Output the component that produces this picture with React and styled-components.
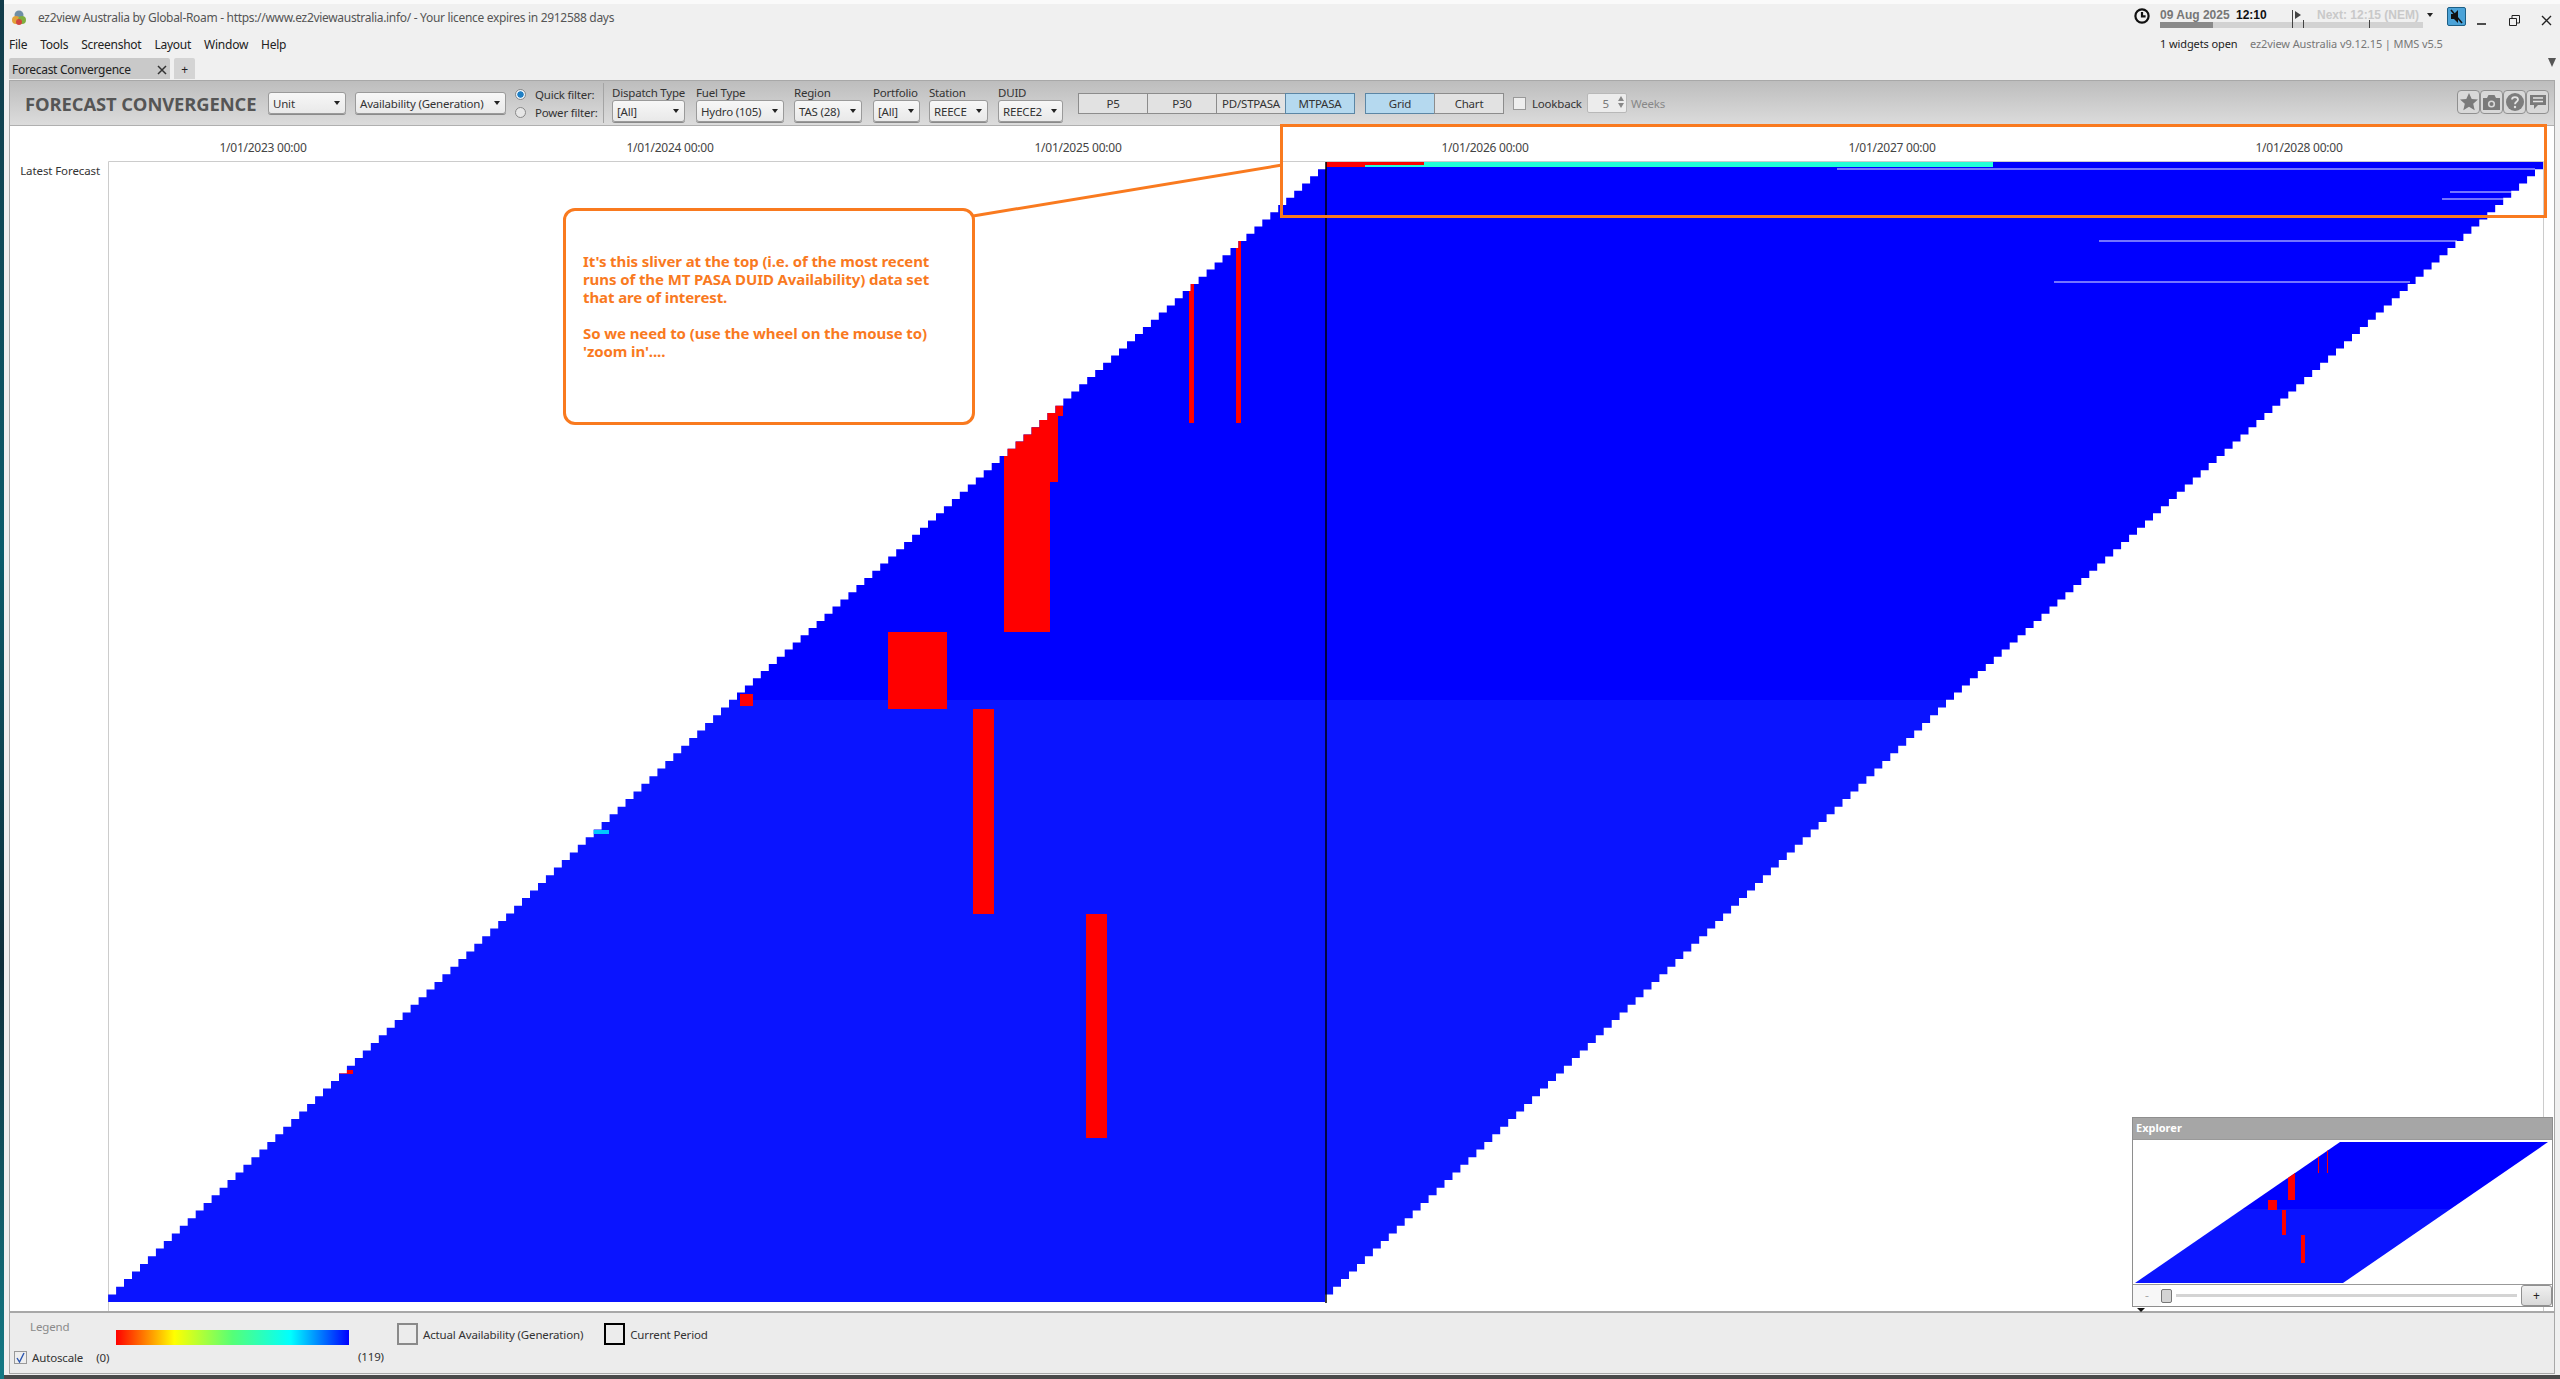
import React from 'react';
import styled, { createGlobalStyle } from 'styled-components';

const GlobalStyle = createGlobalStyle`
  html, body { margin: 0; padding: 0; background: #0d3340; }
  body { font-family: "Noto Sans", "Open Sans", sans-serif; font-size: 12px; color: #333; overflow: hidden; }
`;

const ORANGE = '#f97a1f';

// rows of the convergence grid: tighter above the July 2025 break than below it
const rowTop = (i) => (i <= 75 ? 162 + i * 7.17 : 700 + (i - 75) * 7.62);
const ROWS = 154;
const STEP = 7.96;

const buildStairs = () => {
  let left = '';
  let right = '';
  for (let i = 0; i < ROWS; i++) {
    const y0 = rowTop(i).toFixed(1);
    const y1 = rowTop(i + 1).toFixed(1);
    const lx = (1326 - i * STEP).toFixed(1);
    const rx = (2543 - i * STEP).toFixed(1);
    left += `L${lx} ${y0}L${lx} ${y1}`;
    right = `L${rx} ${y1}L${rx} ${y0}` + right;
  }
  return 'M' + left.slice(1) + right + 'Z';
};

const STAIRS = buildStairs();

const RED_CELLS = [
  [1189, 270, 5, 153],
  [1236, 230, 5, 193],
  [1004, 395, 46, 237],
  [1050, 395, 8, 87],
  [1058, 395, 5, 21],
  [888, 632, 59, 77],
  [740, 694, 13, 12],
  [973, 709, 21, 205],
  [1086, 914, 21, 224],
  [330, 1070, 23, 4],
];

const WHITE_LINES = [
  [1837, 2535, 169],
  [2450, 2512, 192],
  [2442, 2504, 199],
  [2099, 2457, 241],
  [2054, 2410, 282],
];

const AXIS = [
  ['1/01/2023 00:00', 263],
  ['1/01/2024 00:00', 670],
  ['1/01/2025 00:00', 1078],
  ['1/01/2026 00:00', 1485],
  ['1/01/2027 00:00', 1892],
  ['1/01/2028 00:00', 2299],
];

const FILTERS = [
  { label: 'Dispatch Type', value: '[All]', w: 73, gap: 0 },
  { label: 'Fuel Type', value: 'Hydro (105)', w: 88, gap: 11 },
  { label: 'Region', value: 'TAS (28)', w: 68, gap: 10 },
  { label: 'Portfolio', value: '[All]', w: 47, gap: 11 },
  { label: 'Station', value: 'REECE', w: 59, gap: 9 },
  { label: 'DUID', value: 'REECE2', w: 65, gap: 10 },
];

const Page = styled.div`
  position: relative;
  width: 2560px;
  height: 1379px;
  overflow: hidden;
  background: linear-gradient(180deg, #123c4a, #0b5b6a 40%, #0f2e3a 70%, #137a86);
`;

const AppWindow = styled.div`
  margin-left: 4px;
  width: 2556px;
  height: 1379px;
  display: flex;
  flex-direction: column;
  background: #f0f0f0;
  border-bottom: 4px solid #4a4a4a;
  box-sizing: border-box;
`;

const TitleBar = styled.div`
  height: 58px;
  display: flex;
  justify-content: space-between;
  flex: none;
  border-top: 4px solid #fafafa;
  box-sizing: border-box;
`;

const TitleLeft = styled.div`
  display: flex;
  flex-direction: column;
`;

const TitleRow = styled.div`
  height: 27px;
  display: flex;
  align-items: center;
  gap: 11px;
  padding-left: 7px;
  color: #555;
  font-size: 12px;
  letter-spacing: -0.31px;
`;

const MenuRow = styled.div`
  display: flex;
  gap: 13px;
  padding-left: 5px;
  height: 26px;
  align-items: center;
  color: #222;
  font-size: 12px;
  letter-spacing: -0.25px;
`;

const Status = styled.div`
  display: flex;
  align-items: flex-start;
  padding-top: 3px;
  margin-right: -2px;
`;

const ClockWrap = styled.div`
  width: 26px;
  padding-top: 1px;
  display: flex;
`;

const Timeline = styled.div`
  width: 287px;
  display: flex;
  flex-direction: column;
`;

const DateRow = styled.div`
  display: flex;
  align-items: center;
  height: 15px;
  font-family: "Liberation Sans", sans-serif;
  font-weight: 700;
  font-size: 12px;
  white-space: nowrap;
`;

const DateText = styled.span`
  color: #777;
  width: 76px;
`;

const TimeText = styled.span`
  color: #111;
  width: 59px;
`;

const NextText = styled.span`
  color: #c9c9c9;
  width: 104px;
`;

const PlayMark = styled.span`
  width: 0;
  height: 0;
  border-left: 6px solid #444;
  border-top: 4px solid transparent;
  border-bottom: 4px solid transparent;
  margin-right: 16px;
`;

const DownCaret = styled.span`
  width: 0;
  height: 0;
  border-top: 4px solid #222;
  border-left: 3px solid transparent;
  border-right: 3px solid transparent;
  margin-left: 6px;
`;

const Progress = styled.div`
  position: relative;
  width: 263px;
  height: 6px;
  background: #d2d2d2;
`;

const ProgressFill = styled.div`
  height: 100%;
  background: #8a8a8a;
`;

const Tick = styled.div`
  position: absolute;
  bottom: 0;
  width: 1px;
  height: ${(p) => p.$h}px;
  background: #444;
`;

const InfoRow = styled.div`
  display: flex;
  margin-top: 8px;
  font-size: 11px;
  letter-spacing: -0.1px;
  white-space: nowrap;
`;

const WidgetCount = styled.span`
  color: #222;
  width: 90px;
`;

const Version = styled.span`
  color: #777;
`;

const MuteButton = styled.div`
  width: 19px;
  height: 19px;
  flex: none;
  margin-top: 0;
  background: #4ba3d8;
  border: 1px solid #1d5f86;
  border-radius: 2px;
  display: flex;
  align-items: center;
  justify-content: center;
  box-sizing: border-box;
`;

const WinButton = styled.div`
  width: 32px;
  height: 26px;
  flex: none;
  display: flex;
  align-items: center;
  justify-content: center;
`;

const TabStrip = styled.div`
  height: 22px;
  flex: none;
  display: flex;
  align-items: flex-start;
  padding-left: 5px;
  gap: 4px;
`;

const Tab = styled.div`
  height: 21px;
  width: ${(p) => p.$w}px;
  background: ${(p) => p.$bg};
  border-radius: 2px 2px 0 0;
  display: flex;
  align-items: center;
  justify-content: ${(p) => (p.$center ? 'center' : 'space-between')};
  padding: 2px 3px 0;
  box-sizing: border-box;
  font-size: 12px;
  letter-spacing: -0.3px;
  color: #222;
`;

const FilterMark = styled.div`
  margin-left: auto;
  margin-right: 4px;
  width: 0;
  height: 0;
  border-top: 9px solid #555;
  border-left: 4px solid transparent;
  border-right: 4px solid transparent;
`;

const Panel = styled.div`
  flex: 1;
  margin: 0 5px 1px 5px;
  border: 1px solid #a8a8a8;
  display: flex;
  flex-direction: column;
  min-height: 0;
  background: #fff;
`;

const Toolbar = styled.div`
  height: 45px;
  flex: none;
  display: flex;
  align-items: center;
  background: linear-gradient(180deg, #bdbdbd, #dcdcdc);
  border-bottom: 1px solid #b0b0b0;
  box-sizing: border-box;
  padding-left: 15px;
  position: relative;
`;

const ToolTitle = styled.div`
  font-family: "Open Sans", sans-serif;
  font-weight: 700;
  font-size: 18.4px;
  letter-spacing: -0.1px;
  color: #555;
  width: 243px;
  white-space: nowrap;
`;

const SelectBox = styled.div`
  width: ${(p) => p.$w}px;
  height: 22px;
  margin-left: ${(p) => p.$ml || 0}px;
  flex: none;
  background: linear-gradient(180deg, #f7f7f7, #e9e9e9);
  border: 1px solid #9a9a9a;
  border-radius: 3px;
  box-shadow: 0 1px 0 #8a8a8a;
  box-sizing: border-box;
  display: flex;
  align-items: center;
  justify-content: space-between;
  padding: 0 5px 0 4px;
  font-size: 11.5px;
  letter-spacing: -0.2px;
  color: #333;
  white-space: nowrap;
  overflow: hidden;
`;

const SelectCaret = styled.span`
  flex: none;
  width: 0;
  height: 0;
  border-top: 4px solid #222;
  border-left: 3px solid transparent;
  border-right: 3px solid transparent;
`;

const RadioGroup = styled.div`
  width: 84px;
  margin-left: 9px;
  display: flex;
  flex-direction: column;
  gap: 3px;
  flex: none;
  overflow: hidden;
`;

const RadioRow = styled.div`
  display: flex;
  align-items: center;
  gap: 9px;
  height: 15px;
  font-size: 11.5px;
  letter-spacing: -0.2px;
  white-space: nowrap;
  color: #333;
`;

const RadioDot = styled.span`
  width: 9px;
  height: 9px;
  border-radius: 50%;
  flex: none;
  border: 1px solid #888;
  background: ${(p) => (p.$on ? 'radial-gradient(circle, #1f7fc4 0 45%, #e8f3fb 55%)' : '#e6e6e6')};
`;

const Divider = styled.div`
  width: 1px;
  height: 40px;
  background: #a4a4a4;
  margin: 0 8px 0 4px;
  flex: none;
`;

const FilterCol = styled.div`
  width: ${(p) => p.$w}px;
  margin-left: ${(p) => p.$gap}px;
  flex: none;
  display: flex;
  flex-direction: column;
  gap: 0;
  padding-top: 1px;
`;

const FilterLabel = styled.div`
  font-size: 11.5px;
  line-height: 15px;
  letter-spacing: -0.2px;
  color: #333;
  white-space: nowrap;
`;

const ButtonGroup = styled.div`
  display: flex;
  margin-left: ${(p) => p.$ml}px;
  flex: none;
`;

const ToggleButton = styled.div`
  width: 70px;
  height: 21px;
  box-sizing: border-box;
  border: 1px solid ${(p) => (p.$on ? '#5b86a5' : '#8c8c8c')};
  background: ${(p) => (p.$on ? '#b5d9ef' : '#e2e2e2')};
  display: flex;
  align-items: center;
  justify-content: center;
  font-size: 11.5px;
  letter-spacing: -0.2px;
  color: #333;
  margin-left: -1px;
`;

const CheckBox = styled.span`
  width: 13px;
  height: 13px;
  flex: none;
  box-sizing: border-box;
  border: 1px solid #999;
  background: #eee;
  display: flex;
  align-items: center;
  justify-content: center;
`;

const LookbackWrap = styled.div`
  display: flex;
  align-items: center;
  margin-left: 9px;
  font-size: 11.5px;
  letter-spacing: -0.2px;
  color: #333;
`;

const LookbackText = styled.span`
  margin-left: 6px;
  width: 55px;
`;

const Spinner = styled.div`
  width: 40px;
  height: 20px;
  box-sizing: border-box;
  border: 1px solid #b8b8b8;
  border-radius: 2px;
  background: #ececec;
  display: flex;
  align-items: center;
  justify-content: flex-end;
  padding-right: 17px;
  color: #777;
  position: relative;
`;

const SpinArrows = styled.span`
  position: absolute;
  right: 2px;
  top: 2px;
  display: flex;
  flex-direction: column;
  gap: 2px;
`;

const Arrow = styled.span`
  width: 0;
  height: 0;
  border-left: 3px solid transparent;
  border-right: 3px solid transparent;
  border-${(p) => p.$dir}: 5px solid #888;
`;

const Weeks = styled.span`
  margin-left: 4px;
  color: #888;
`;

const IconButtons = styled.div`
  margin-left: auto;
  margin-right: 5px;
  margin-top: -2px;
  display: flex;
  flex: none;
`;

const IconButton = styled.div`
  width: 23px;
  height: 24px;
  box-sizing: border-box;
  border: 1px solid #909090;
  border-radius: 4px;
  background: #d8d8d8;
  display: flex;
  align-items: center;
  justify-content: center;
`;

const AxisRow = styled.div`
  height: 35px;
  flex: none;
  position: relative;
  background: #fff;
`;

const AxisLabel = styled.span`
  position: absolute;
  top: 13px;
  transform: translateX(-50%);
  font-size: 12px;
  letter-spacing: -0.25px;
  color: #444;
  white-space: nowrap;
`;

const ChartRow = styled.div`
  flex: 1;
  min-height: 0;
  display: flex;
  background: #fff;
  border-bottom: 2px solid #a8a8a8;
`;

const RowGutter = styled.div`
  width: 98px;
  flex: none;
  text-align: right;
  padding: 2px 8px 0 0;
  box-sizing: border-box;
  font-size: 11.5px;
  letter-spacing: -0.1px;
  color: #333;
`;

const PlotSvg = styled.svg`
  display: block;
  flex: 1;
  min-width: 0;
  height: 100%;
`;

const Footer = styled.div`
  height: 60px;
  flex: none;
  background: #ececec;
  display: flex;
  padding-left: 4px;
  font-size: 11.5px;
  letter-spacing: -0.15px;
  color: #333;
`;

const LegendGrid = styled.div`
  display: grid;
  grid-template-columns: 102px 233px 48px;
  grid-template-rows: 33px 27px;
  flex: none;
`;

const LegendTitle = styled.div`
  padding: 6px 0 0 16px;
  color: #8a8a8a;
`;

const ColourBar = styled.div`
  height: 15px;
  margin-top: 17px;
  background: linear-gradient(90deg, #f00, #ff0 25%, #55ff77 50%, #0ff 75%, #00f);
`;

const AutoRow = styled.div`
  display: flex;
  align-items: center;
  gap: 5px;
  height: 20px;
  margin-top: 1px;
  grid-column: 1;
`;

const EndValue = styled.div`
  grid-column: 3;
  padding: 3px 0 0 9px;
`;

const KeyItem = styled.div`
  display: flex;
  align-items: center;
  gap: 5px;
  height: 22px;
  margin: 10px 0 0 ${(p) => p.$ml}px;
  flex: none;
`;

const KeySwatch = styled.span`
  width: 21px;
  height: 22px;
  box-sizing: border-box;
  border: 2px solid ${(p) => p.$c};
  display: block;
`;

const CalloutBox = styled.div`
  position: absolute;
  left: 563px;
  top: 208px;
  width: 412px;
  height: 217px;
  box-sizing: border-box;
  border: 3px solid ${ORANGE};
  border-radius: 12px;
  background: #fff;
  padding: 41px 17px 0 17px;
  color: ${ORANGE};
  font-family: "Noto Sans", sans-serif;
  font-weight: 700;
  font-size: 15px;
  line-height: 18px;
  letter-spacing: -0.1px;
`;

const CalloutLine = styled.p`
  margin: 0;
  min-height: 18px;
  white-space: nowrap;
`;

const HighlightBox = styled.div`
  position: absolute;
  left: 1280px;
  top: 124px;
  width: 1267px;
  height: 94px;
  box-sizing: border-box;
  border: 3px solid ${ORANGE};
  pointer-events: none;
`;

const Leader = styled.svg`
  position: absolute;
  left: 960px;
  top: 150px;
`;

const Explorer = styled.div`
  position: absolute;
  left: 2132px;
  top: 1117px;
  width: 421px;
  height: 190px;
  box-sizing: border-box;
  border: 1px solid #8e8e8e;
  background: #fff;
  display: flex;
  flex-direction: column;
`;

const ExplorerHeader = styled.div`
  height: 21px;
  flex: none;
  background: #a6a6a6;
  color: #fff;
  font-weight: 700;
  font-size: 11px;
  line-height: 20px;
  padding-left: 3px;
`;

const ExplorerSvg = styled.svg`
  display: block;
  flex: none;
  border-bottom: 1px solid #999;
  border-top: 1px solid #999;
`;

const SliderRow = styled.div`
  flex: 1;
  display: flex;
  align-items: center;
`;

const ZoomButton = styled.div`
  width: ${(p) => p.$w}px;
  height: 21px;
  flex: none;
  box-sizing: border-box;
  border: ${(p) => (p.$plain ? '0' : '1px solid #909090')};
  border-radius: 3px;
  background: ${(p) => (p.$plain ? '#f7f7f7' : 'linear-gradient(180deg,#f0f0f0,#d8d8d8)')};
  color: ${(p) => (p.$plain ? '#aaa' : '#222')};
  display: flex;
  align-items: center;
  justify-content: center;
  font-size: 12px;
`;

const SliderThumb = styled.div`
  width: 11px;
  height: 14px;
  flex: none;
  box-sizing: border-box;
  border: 1px solid #777;
  border-radius: 2px;
  background: #d4d4d4;
`;

const SliderTrack = styled.div`
  flex: 1;
  height: 3px;
  margin: 0 4px;
  background: #d4d4d4;
`;

const ExplorerCaret = styled.div`
  position: absolute;
  left: 2137px;
  top: 1308px;
  width: 0;
  height: 0;
  border-top: 4px solid #111;
  border-left: 4px solid transparent;
  border-right: 4px solid transparent;
`;

const Logo = () => (
  <svg width="16" height="16" viewBox="0 0 16 16">
    <circle cx="8" cy="5" r="4.5" fill="#6f8fa6" />
    <circle cx="5" cy="10" r="4" fill="#e2a23a" />
    <circle cx="11" cy="10" r="4" fill="#7fae3f" />
    <circle cx="8" cy="12" r="3" fill="#d2453f" />
  </svg>
);

const ClockIcon = () => (
  <svg width="16" height="16" viewBox="0 0 16 16" fill="none" stroke="#111" strokeWidth="2.2">
    <circle cx="8" cy="8" r="6.6" />
    <path d="M8 4v4.4h3.6" />
  </svg>
);

const MuteIcon = () => (
  <svg width="15" height="15" viewBox="0 0 15 15">
    <path d="M2 5h3l4-4v13l-4-4H2z" fill="#111" />
    <path d="M2 1l11 13" stroke="#111" strokeWidth="1.6" />
  </svg>
);

const StarIcon = () => (
  <svg width="20" height="20" viewBox="0 0 20 20">
    <path d="M10 1l2.7 6 6.3.6-4.8 4.2 1.5 6.4L10 14.8 4.3 18.2l1.5-6.4L1 7.6 7.3 7z" fill="#7a7a7a" />
  </svg>
);

const CameraIcon = () => (
  <svg width="19" height="17" viewBox="0 0 19 17">
    <path d="M1 4h4l1.5-3h6L14 4h4v12H1z" fill="#7a7a7a" />
    <circle cx="9.5" cy="10" r="3.6" fill="#d8d8d8" />
    <circle cx="9.5" cy="10" r="2" fill="#7a7a7a" />
  </svg>
);

const HelpIcon = () => (
  <svg width="20" height="20" viewBox="0 0 20 20">
    <circle cx="10" cy="10" r="9" fill="#7d7d7d" />
    <path d="M7 7.6C7 4.2 13 4.2 13 7.6c0 2.2-3 2.2-3 4.6" fill="none" stroke="#e4e4e4" strokeWidth="1.8" />
    <circle cx="10" cy="15" r="1.2" fill="#e4e4e4" />
  </svg>
);

const ChatIcon = () => (
  <svg width="18" height="18" viewBox="0 0 18 18">
    <path d="M1 2h16v10H9l-4 4v-4H1z" fill="#7a7a7a" />
    <path d="M4 5h10M4 8.5h10" stroke="#e4e4e4" strokeWidth="1.4" />
  </svg>
);

const Convergence = () => (
  <PlotSvg viewBox="108 161 2446 1150" preserveAspectRatio="none">
    <defs>
      <clipPath id="stairs">
        <path d={STAIRS} />
      </clipPath>
    </defs>
    <path d="M108.5 161.5H2543.5V1311" fill="none" stroke="#ccc" />
    <path d="M108.5 161.5V1311" fill="none" stroke="#ccc" />
    <g clipPath="url(#stairs)">
      <rect x="100" y="160" width="2450" height="540" fill="#0000ff" />
      <rect x="100" y="700" width="2450" height="610" fill="#0a14ff" />
      {RED_CELLS.map(([x, y, w, h]) => (
        <rect key={`${x}-${y}`} x={x} y={y} width={w} height={h} fill="#ff0000" />
      ))}
      <rect x="593" y="830" width="16" height="4" fill="#00c8ff" />
      <rect x="1424" y="162" width="569" height="5" fill="#22ffd8" />
      <rect x="1365" y="165" width="59" height="2" fill="#22ffd8" />
      <rect x="1326" y="162" width="39" height="5" fill="#ff0000" />
      <rect x="1365" y="162" width="59" height="3" fill="#ff0000" />
    </g>
    {WHITE_LINES.map(([x1, x2, y]) => (
      <line key={y} x1={x1} x2={x2} y1={y} y2={y} stroke="#e8e8ff" strokeWidth="1.2" />
    ))}
    <line x1="1326" x2="1326" y1="162" y2="1303" stroke="#000" strokeWidth="1.5" />
  </PlotSvg>
);

const ExplorerChart = () => (
  <ExplorerSvg width="419" height="144" viewBox="2133 1139 419 144">
    <defs>
      <clipPath id="mini">
        <path d="M2135 1282L2340 1141H2548L2343 1282Z" />
      </clipPath>
    </defs>
    <g clipPath="url(#mini)">
      <rect x="2133" y="1139" width="419" height="69" fill="#0000ff" />
      <rect x="2133" y="1208" width="419" height="75" fill="#0a14ff" />
      <rect x="2288" y="1170" width="7" height="29" fill="#ff0000" />
      <rect x="2268" y="1199" width="9" height="10" fill="#ff0000" />
      <rect x="2282" y="1209" width="4" height="25" fill="#ff0000" />
      <rect x="2301" y="1234" width="4" height="28" fill="#ff0000" />
      <rect x="2318" y="1155" width="1" height="17" fill="#ff0000" />
      <rect x="2327" y="1149" width="1" height="23" fill="#ff0000" />
    </g>
  </ExplorerSvg>
);

const App = () => (
  <Page>
    <GlobalStyle />
    <AppWindow>
      <TitleBar>
        <TitleLeft>
          <TitleRow>
            <Logo />
            <span>ez2view Australia by Global-Roam - https://www.ez2viewaustralia.info/ - Your licence expires in 2912588 days</span>
          </TitleRow>
          <MenuRow>
            <span>File</span>
            <span>Tools</span>
            <span>Screenshot</span>
            <span>Layout</span>
            <span>Window</span>
            <span>Help</span>
          </MenuRow>
        </TitleLeft>
        <Status>
          <ClockWrap>
            <ClockIcon />
          </ClockWrap>
          <Timeline>
            <DateRow>
              <DateText>09 Aug 2025</DateText>
              <TimeText>12:10</TimeText>
              <PlayMark />
              <NextText>Next: 12:15 (NEM)</NextText>
              <DownCaret />
            </DateRow>
            <Progress>
              <ProgressFill style={{ width: '20%' }} />
              <Tick $h={18} style={{ left: '50%' }} />
              <Tick $h={8} style={{ left: '54.4%' }} />
              <Tick $h={8} style={{ left: '79.5%' }} />
            </Progress>
            <InfoRow>
              <WidgetCount>1 widgets open</WidgetCount>
              <Version>ez2view Australia v9.12.15 | MMS v5.5</Version>
            </InfoRow>
          </Timeline>
          <MuteButton>
            <MuteIcon />
          </MuteButton>
          <WinButton>
            <svg width="10" height="10" viewBox="0 0 10 10"><path d="M0 9h9" stroke="#222" strokeWidth="1.6" /></svg>
          </WinButton>
          <WinButton>
            <svg width="11" height="11" viewBox="0 0 11 11" fill="none" stroke="#222"><path d="M.5 3.5h7v7h-7zM3 3V.5h7.5V8H8" /></svg>
          </WinButton>
          <WinButton>
            <svg width="11" height="11" viewBox="0 0 11 11" fill="none" stroke="#222" strokeWidth="1.4"><path d="M1 1l9 9M10 1l-9 9" /></svg>
          </WinButton>
        </Status>
      </TitleBar>
      <TabStrip>
        <Tab $w={161} $bg="#c9c9c9">
          <span>Forecast Convergence</span>
          <svg width="10" height="10" viewBox="0 0 10 10" fill="none" stroke="#333" strokeWidth="1.5"><path d="M1 1l8 8M9 1l-8 8" /></svg>
        </Tab>
        <Tab $w={21} $bg="#d4d4d4" $center>+</Tab>
        <FilterMark />
      </TabStrip>
      <Panel>
        <Toolbar>
          <ToolTitle>FORECAST CONVERGENCE</ToolTitle>
          <SelectBox $w={78}>Unit<SelectCaret /></SelectBox>
          <SelectBox $w={151} $ml={9}>Availability (Generation)<SelectCaret /></SelectBox>
          <RadioGroup>
            <RadioRow><RadioDot $on />Quick filter:</RadioRow>
            <RadioRow><RadioDot />Power filter:</RadioRow>
          </RadioGroup>
          <Divider />
          {FILTERS.map((f) => (
            <FilterCol key={f.label} $w={f.w} $gap={f.gap}>
              <FilterLabel>{f.label}</FilterLabel>
              <SelectBox $w={f.w}>{f.value}<SelectCaret /></SelectBox>
            </FilterCol>
          ))}
          <ButtonGroup $ml={16}>
            <ToggleButton>P5</ToggleButton>
            <ToggleButton>P30</ToggleButton>
            <ToggleButton>PD/STPASA</ToggleButton>
            <ToggleButton $on>MTPASA</ToggleButton>
          </ButtonGroup>
          <ButtonGroup $ml={11}>
            <ToggleButton $on>Grid</ToggleButton>
            <ToggleButton>Chart</ToggleButton>
          </ButtonGroup>
          <LookbackWrap>
            <CheckBox />
            <LookbackText>Lookback</LookbackText>
            <Spinner>
              5
              <SpinArrows>
                <Arrow $dir="bottom" />
                <Arrow $dir="top" />
              </SpinArrows>
            </Spinner>
            <Weeks>Weeks</Weeks>
          </LookbackWrap>
          <IconButtons>
            <IconButton><StarIcon /></IconButton>
            <IconButton><CameraIcon /></IconButton>
            <IconButton><HelpIcon /></IconButton>
            <IconButton><ChatIcon /></IconButton>
          </IconButtons>
        </Toolbar>
        <AxisRow>
          {AXIS.map(([text, x]) => (
            <AxisLabel key={text} style={{ left: x - 10 }}>{text}</AxisLabel>
          ))}
        </AxisRow>
        <ChartRow>
          <RowGutter>Latest Forecast</RowGutter>
          <Convergence />
        </ChartRow>
        <Footer>
          <LegendGrid>
            <LegendTitle>Legend</LegendTitle>
            <ColourBar />
            <div />
            <AutoRow>
              <CheckBox>
                <svg width="11" height="11" viewBox="0 0 11 11" fill="none" stroke="#2a55b0" strokeWidth="1.4"><path d="M2 6l2.5 4L9 1" /></svg>
              </CheckBox>
              <span>Autoscale</span>
              <span style={{ marginLeft: 8 }}>(0)</span>
            </AutoRow>
            <div />
            <EndValue>(119)</EndValue>
          </LegendGrid>
          <KeyItem $ml={0}>
            <KeySwatch $c="#8a8a8a" />
            <span>Actual Availability (Generation)</span>
          </KeyItem>
          <KeyItem $ml={21}>
            <KeySwatch $c="#000" />
            <span>Current Period</span>
          </KeyItem>
        </Footer>
      </Panel>
    </AppWindow>
    <CalloutBox>
      <CalloutLine>It's this sliver at the top (i.e. of the most recent</CalloutLine>
      <CalloutLine>runs of the MT PASA DUID Availability) data set</CalloutLine>
      <CalloutLine>that are of interest.</CalloutLine>
      <CalloutLine />
      <CalloutLine>So we need to (use the wheel on the mouse to)</CalloutLine>
      <CalloutLine>'zoom in'....</CalloutLine>
    </CalloutBox>
    <Leader width="330" height="80" viewBox="960 150 330 80">
      <line x1="973" y1="216" x2="1282" y2="165" stroke={ORANGE} strokeWidth="3" />
    </Leader>
    <HighlightBox />
    <Explorer>
      <ExplorerHeader>Explorer</ExplorerHeader>
      <ExplorerChart />
      <SliderRow>
        <ZoomButton $w={28} $plain>-</ZoomButton>
        <SliderThumb />
        <SliderTrack />
        <ZoomButton $w={31}>+</ZoomButton>
      </SliderRow>
    </Explorer>
    <ExplorerCaret />
  </Page>
);

export default App;
